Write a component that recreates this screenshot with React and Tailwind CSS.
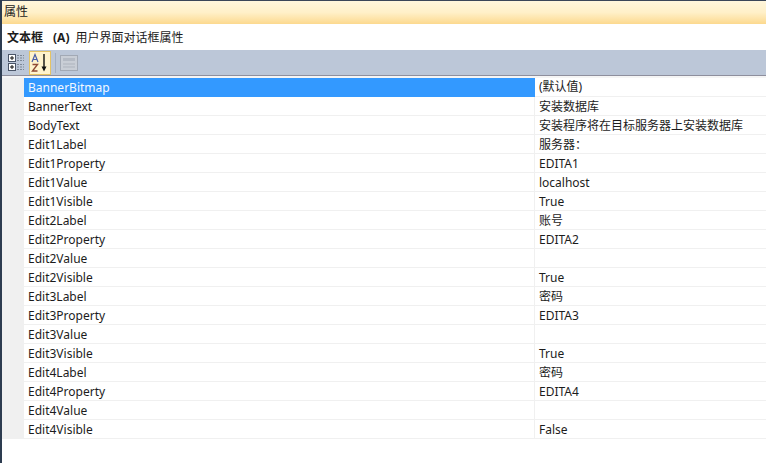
const rows = [
  ['BannerBitmap', '(默认值)'],
  ['BannerText', '安装数据库'],
  ['BodyText', '安装程序将在目标服务器上安装数据库'],
  ['Edit1Label', '服务器：'],
  ['Edit1Property', 'EDITA1'],
  ['Edit1Value', 'localhost'],
  ['Edit1Visible', 'True'],
  ['Edit2Label', '账号'],
  ['Edit2Property', 'EDITA2'],
  ['Edit2Value', ''],
  ['Edit2Visible', 'True'],
  ['Edit3Label', '密码'],
  ['Edit3Property', 'EDITA3'],
  ['Edit3Value', ''],
  ['Edit3Visible', 'True'],
  ['Edit4Label', '密码'],
  ['Edit4Property', 'EDITA4'],
  ['Edit4Value', ''],
  ['Edit4Visible', 'False'],
];

const CategoryIcon = () => (
  <svg width="17" height="18" viewBox="0 0 17 18">
    <rect x="0.5" y="0.5" width="7" height="7" fill="#fff" stroke="#4a5568" />
    <path d="M2 4h4M4 2v4" stroke="#111" />
    <rect x="0.5" y="9.5" width="7" height="7" fill="#fff" stroke="#4a5568" />
    <path d="M2 13h4M4 11v4" stroke="#111" />
    <path d="M9 1.5h7M9 4h7M9 6.5h7M9 10.5h7M9 13h7M9 15.5h7" stroke="#7d8796" strokeDasharray="2 1" />
  </svg>
);

const SortIcon = () => (
  <svg width="18" height="20" viewBox="0 0 18 20">
    <path d="M1 9L4 1.5 7 9M2.2 6.5h3.6" fill="none" stroke="#4a5da8" strokeWidth="1.2" />
    <path d="M1.5 11.5h5L1.5 18h5" fill="none" stroke="#8f4a35" strokeWidth="1.4" />
    <path d="M13 1v14" stroke="#111" strokeWidth="1.4" />
    <path d="M10.5 13.5h5L13 18.5z" fill="#111" />
  </svg>
);

const PagesIcon = () => (
  <svg width="18" height="16" viewBox="0 0 18 16">
    <rect x="0.5" y="0.5" width="17" height="15" fill="#c9ced6" stroke="#a2a9b5" />
    <rect x="3" y="3" width="12" height="3" fill="#b4bac4" />
    <path d="M3 9h12M3 12h12" stroke="#adb3bd" />
  </svg>
);

export default function App() {
  return (
    <div className="flex h-[463px] w-[766px] flex-col overflow-hidden border-l-2 border-[#2d3c50] bg-white font-['Noto_Sans','Noto_Sans_CJK_SC',sans-serif] text-[12px] text-[#1c1c1c]">
      <div className="flex h-6 items-center border-t border-[#3a4658] bg-gradient-to-b from-[#fff6dc] via-[#fff0c8] to-[#fcd98e] pb-0.5 pl-0.5 text-[12px] leading-none text-[#222]">
        属性
      </div>
      <div className="flex h-[26px] items-center gap-1.5 bg-white pl-[5px] pt-0.5">
        <span className="font-bold">文本框</span>
        <span className="ml-1 font-bold">(A)</span>
        <span>用户界面对话框属性</span>
      </div>
      <div className="flex h-[25px] items-center bg-[#bcc7d8] pl-1.5">
        <div className="flex h-[22px] w-[19px] items-center justify-start">
          <CategoryIcon />
        </div>
        <div className="ml-0.5 flex h-[24px] w-[22px] items-center justify-center border border-[#e5c365] bg-[#fff3cd]">
          <SortIcon />
        </div>
        <div className="ml-1 h-[20px] w-px bg-[#a4afc2]" />
        <div className="ml-1 flex h-[22px] w-[18px] items-center justify-center">
          <PagesIcon />
        </div>
      </div>
      <div className="h-[3px] border-t border-[#8e8f9d] bg-[#f5f5f5]" />
      <div className="flex flex-col">
        {rows.map(([name, value], i) => (
          <div key={name} className="flex h-[19px]">
            <div className="w-[22px] shrink-0 bg-[#f0f0f0]" />
            <div
              className={
                i === 0
                  ? 'flex w-[511px] shrink-0 items-center border-r border-[#3399ff] bg-[#3399ff] pl-1 text-[#f3f8ff]'
                  : 'flex w-[511px] shrink-0 items-center border-r border-b border-[#f0f0f0] pl-1 pt-px'
              }
            >
              {name}
            </div>
            <div
              className={
                i === 0
                  ? 'flex flex-1 items-center border-b border-[#f0f0f0] pl-1'
                  : 'flex flex-1 items-center border-b border-[#f0f0f0] pl-1 pt-px'
              }
            >
              {value}
            </div>
          </div>
        ))}
      </div>
    </div>
  );
}
